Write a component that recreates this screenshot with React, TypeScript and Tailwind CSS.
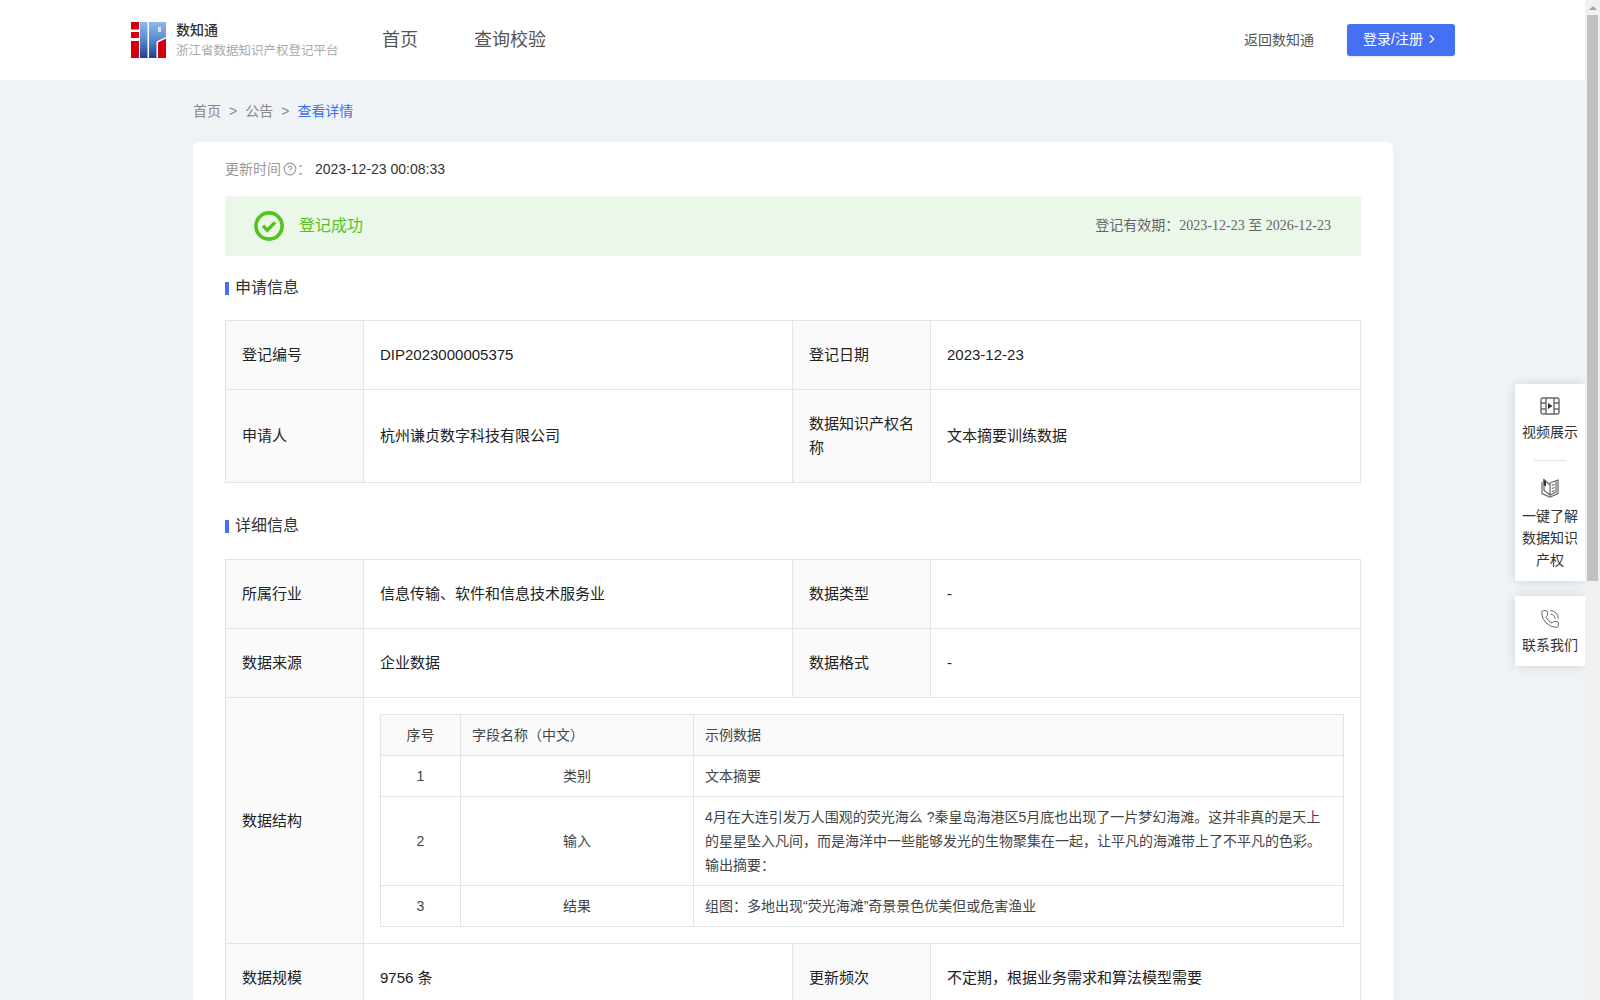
import { ChevronRight, CircleHelp, PhoneCall } from "lucide-react";

const inputText =
  "4月在大连引发万人围观的荧光海么 ?秦皇岛海港区5月底也出现了一片梦幻海滩。这并非真的是天上的星星坠入凡间，而是海洋中一些能够发光的生物聚集在一起，让平凡的海滩带上了不平凡的色彩。输出摘要：";

function Logo() {
  return (
    <svg width="35" height="36" viewBox="0 0 35 36" className="shrink-0">
      <defs>
        <linearGradient id="logoBlue" x1="0" y1="0" x2="0" y2="1">
          <stop offset="0" stopColor="#8db9ea" />
          <stop offset="0.45" stopColor="#5f8fd0" />
          <stop offset="1" stopColor="#1e3f8e" />
        </linearGradient>
      </defs>
      <rect x="0" y="0" width="8" height="7.5" fill="#d5000f" />
      <rect x="0" y="10" width="8" height="6" fill="#d5000f" />
      <rect x="0" y="19" width="8" height="17" fill="#d5000f" />
      <rect x="9" y="0" width="7.5" height="36" fill="url(#logoBlue)" />
      <path d="M18 0H35V15L25.5 19.5V36H18Z" fill="url(#logoBlue)" />
      <rect x="27" y="5" width="3" height="5" fill="#d6e4f6" />
      <path d="M27 20.5L35 16.5V36H27Z" fill="#d5000f" />
    </svg>
  );
}

function FilmIcon() {
  return (
    <svg width="20" height="18" viewBox="0 0 20 18" fill="none" stroke="#666" strokeWidth="1.4">
      <rect x="1" y="1" width="18" height="16" rx="2" />
      <path d="M6 1V17M14 1V17M1 6H6M1 12H6M14 6H19M14 12H19" />
      <path d="M8 6L12.5 9L8 12Z" fill="#333" stroke="none" />
    </svg>
  );
}

function BookIcon() {
  return (
    <svg width="20" height="20" viewBox="0 0 20 20" fill="none" stroke="#666" strokeWidth="1.2">
      <path d="M2 4V15.5L10 19L18 15.5V2L11 4.5L9.5 6.5L4 1.5V4" />
      <path d="M4 1.5V12.5L10 17V6.5" />
      <path d="M10 17L16 14V3.5" />
      <path d="M3.8 1.8V7L6 8.5V3.6Z" fill="#333" stroke="none" />
      <path d="M11.8 7.5L14.5 6.5M11.8 10.5L14.5 9.5M11.8 13.5L14.5 12.5" />
    </svg>
  );
}

function SuccessIcon() {
  return (
    <svg width="30" height="30" viewBox="0 0 30 30" fill="none" className="shrink-0">
      <circle cx="15" cy="15" r="13.1" stroke="#52c41a" strokeWidth="3.6" />
      <path d="M9 14.8L13.3 19.2L21 11.4" stroke="#52c41a" strokeWidth="3.4" />
    </svg>
  );
}

function Label({ children }: { children: React.ReactNode }) {
  return <td className="border border-[#e4e4e4] bg-[#fafafa] px-4 leading-[24px]">{children}</td>;
}

function Value({ children }: { children: React.ReactNode }) {
  return <td className="border border-[#e4e4e4] px-4 leading-[24px]">{children}</td>;
}

function SectionTitle({ children }: { children: React.ReactNode }) {
  return (
    <div className="flex items-center gap-[6px] text-base leading-6 text-[#333]">
      <span className="mt-[1px] h-[13px] w-1 bg-[#4470f4]" />
      {children}
    </div>
  );
}

function Cols() {
  return (
    <colgroup>
      <col className="w-[138px]" />
      <col className="w-[429px]" />
      <col className="w-[138px]" />
      <col />
    </colgroup>
  );
}

function FieldTable() {
  const cell = "border border-[#e4e4e4] px-[11px] leading-6";
  return (
    <table className="w-full table-fixed border-collapse text-sm text-[#444]">
      <colgroup>
        <col className="w-[80px]" />
        <col className="w-[233px]" />
        <col />
      </colgroup>
      <tbody>
        <tr className="h-[41px] bg-[#fafafa]">
          <td className={`${cell} text-center`}>序号</td>
          <td className={cell}>字段名称（中文）</td>
          <td className={cell}>示例数据</td>
        </tr>
        <tr className="h-[41px]">
          <td className={`${cell} text-center`}>1</td>
          <td className={`${cell} text-center`}>类别</td>
          <td className={cell}>文本摘要</td>
        </tr>
        <tr className="h-[89px]">
          <td className={`${cell} text-center`}>2</td>
          <td className={`${cell} text-center`}>输入</td>
          <td className={`${cell} pr-4`}>{inputText}</td>
        </tr>
        <tr className="h-[41px]">
          <td className={`${cell} text-center`}>3</td>
          <td className={`${cell} text-center`}>结果</td>
          <td className={cell}>组图：多地出现“荧光海滩”奇景景色优美但或危害渔业</td>
        </tr>
      </tbody>
    </table>
  );
}

function FloatingTools() {
  return (
    <div className="absolute right-0 top-[384px] flex w-[70px] flex-col gap-[15px] text-center text-sm leading-[22px] text-[#333]">
      <div className="flex flex-col items-center bg-white pb-[10px] pt-[13px] shadow-[0_0_10px_rgba(0,0,0,0.13)]">
        <FilmIcon />
        <div className="mt-[6px]">视频展示</div>
        <div className="my-[17px] h-px w-8 bg-[#e5e5e5]" />
        <BookIcon />
        <div className="mt-[7px] w-[60px]">一键了解数据知识产权</div>
      </div>
      <div className="flex flex-col items-center bg-white pb-[10px] pt-[13px] shadow-[0_0_10px_rgba(0,0,0,0.13)]">
        <PhoneCall size={20} strokeWidth={1.1} color="#555" />
        <div className="mt-[5px]">联系我们</div>
      </div>
    </div>
  );
}

function Scrollbar() {
  return (
    <div className="flex h-full w-[15px] shrink-0 flex-col items-center bg-[#f1f1f1]">
      <div className="flex h-[15px] w-full items-center justify-center">
        <span className="h-0 w-0 border-x-[4px] border-b-[4px] border-x-transparent border-b-[#a3a3a3]" />
      </div>
      <div className="h-[566px] w-[11px] bg-[#c1c1c1]" />
    </div>
  );
}

export default function App() {
  return (
    <div className="flex h-screen overflow-hidden bg-[#eff3f6] font-['Liberation_Sans','Noto_Sans_CJK_SC',sans-serif]">
      <div className="relative min-w-0 flex-1 overflow-hidden">
        <header className="flex h-20 items-center bg-white pl-[131px] pr-[130px]">
          <Logo />
          <div className="ml-[10px] w-[163px]">
            <div className="text-sm font-medium leading-5 text-[#333]">数知通</div>
            <div className="mt-[1px] whitespace-nowrap text-[12.5px] leading-5 text-[#aaa]">浙江省数据知识产权登记平台</div>
          </div>
          <nav className="ml-[43px] flex gap-[56px] text-lg text-[#555]">
            <span>首页</span>
            <span>查询校验</span>
          </nav>
          <span className="ml-auto text-sm text-[#555]">返回数知通</span>
          <button className="ml-[33px] flex h-8 w-[108px] items-center justify-center gap-[2px] rounded-[3px] bg-[#4470f4] pb-[2px] text-sm text-white shadow-[0_1px_2px_rgba(0,0,0,0.1)]">
            登录/注册
            <ChevronRight size={14} />
          </button>
        </header>

        <main className="ml-[193px] w-[1200px]">
          <div className="flex h-[62px] items-center gap-2 pb-[1px] text-sm text-[#888]">
            <span>首页</span>
            <span>&gt;</span>
            <span>公告</span>
            <span>&gt;</span>
            <span className="text-[#3a6ff0]">查看详情</span>
          </div>

          <section className="rounded-t-md bg-white px-8 pt-4">
            <div className="flex h-5 items-center pt-[2px] text-sm text-[#999]">
              更新时间
              <CircleHelp size={14} className="ml-[2px]" />
              <span className="mr-[4px]">：</span>
              <span className="text-[#333]">2023-12-23 00:08:33</span>
            </div>

            <div className="mt-[18px] flex h-[60px] items-center bg-[#ebf7e8] pl-[29px] pr-[30px]">
              <SuccessIcon />
              <span className="ml-[15px] text-base text-[#52c41a]">登记成功</span>
              <span className="ml-auto pb-[2px] text-sm text-[#666]">
                登记有效期：
                <span className="font-['Liberation_Serif','Noto_Sans_CJK_SC',serif]">2023-12-23 至 2026-12-23</span>
              </span>
            </div>

            <div className="mt-[20px]">
              <SectionTitle>申请信息</SectionTitle>
            </div>

            <table className="mt-[20px] w-full table-fixed border-collapse text-[15px] text-[#222]">
              <Cols />
              <tbody>
                <tr className="h-[69px]">
                  <Label>登记编号</Label>
                  <Value>DIP2023000005375</Value>
                  <Label>登记日期</Label>
                  <Value>2023-12-23</Value>
                </tr>
                <tr className="h-[93px]">
                  <Label>申请人</Label>
                  <Value>杭州谦贞数字科技有限公司</Value>
                  <Label>数据知识产权名称</Label>
                  <Value>文本摘要训练数据</Value>
                </tr>
              </tbody>
            </table>

            <div className="mt-[31px]">
              <SectionTitle>详细信息</SectionTitle>
            </div>

            <table className="mt-[21px] w-full table-fixed border-collapse text-[15px] text-[#222]">
              <Cols />
              <tbody>
                <tr className="h-[69px]">
                  <Label>所属行业</Label>
                  <Value>信息传输、软件和信息技术服务业</Value>
                  <Label>数据类型</Label>
                  <Value>-</Value>
                </tr>
                <tr className="h-[69px]">
                  <Label>数据来源</Label>
                  <Value>企业数据</Value>
                  <Label>数据格式</Label>
                  <Value>-</Value>
                </tr>
                <tr className="h-[246px]">
                  <Label>数据结构</Label>
                  <td colSpan={3} className="border border-[#e4e4e4] px-4">
                    <FieldTable />
                  </td>
                </tr>
                <tr className="h-[69px]">
                  <Label>数据规模</Label>
                  <Value>9756 条</Value>
                  <Label>更新频次</Label>
                  <Value>不定期，根据业务需求和算法模型需要</Value>
                </tr>
              </tbody>
            </table>
          </section>
        </main>

        <FloatingTools />
      </div>
      <Scrollbar />
    </div>
  );
}
